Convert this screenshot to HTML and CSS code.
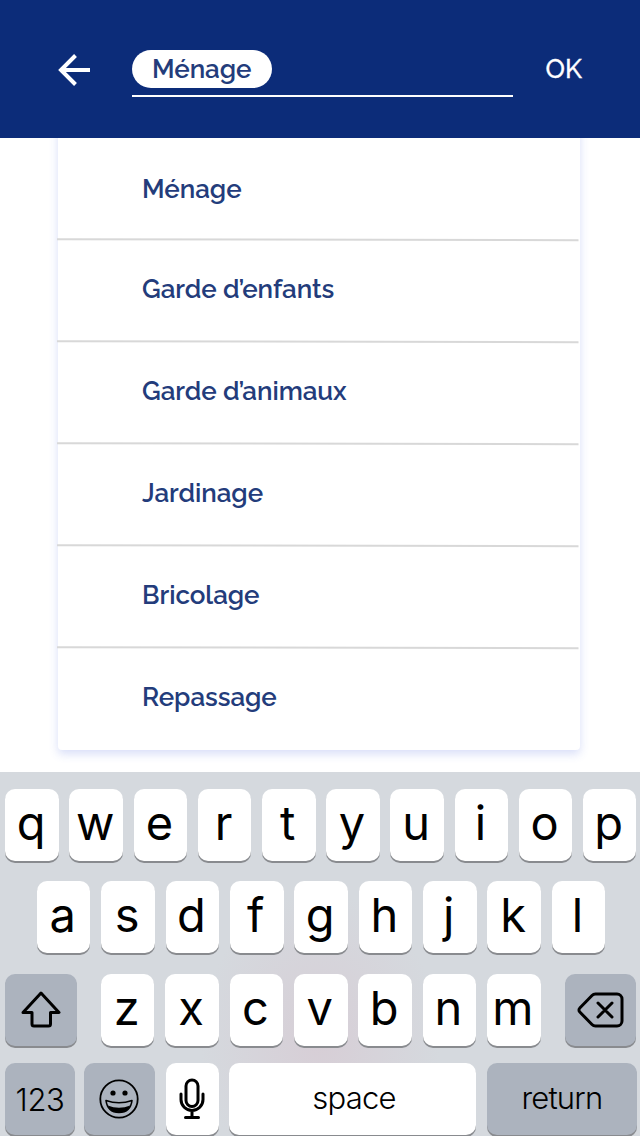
FILE: index.html
```html
<!DOCTYPE html>
<html lang="fr">
<head>
<meta charset="utf-8">
<title>Services</title>
<link rel="stylesheet" href="styles.css">
</head>
<body>
<header class="topbar">
  <svg class="back" width="34" height="34" viewBox="0 0 34 34"><path d="M33 17H4M18.500 2.500L4 17l14.500 14.500" fill="none" stroke="#fff" stroke-width="4"/></svg>
  <div class="field"><span class="chip">Ménage</span></div>
  <span class="ok">OK</span>
</header>
<main class="content">
  <ul class="options">
    <li class="option"><span>Ménage</span><svg class="rule" viewBox="0 0 522 4"><path d="M0 1.2L521.5 2.2"/></svg></li>
    <li class="option"><span>Garde d’enfants</span><svg class="rule" viewBox="0 0 522 4"><path d="M0 1.2L521.5 2.2"/></svg></li>
    <li class="option"><span>Garde d’animaux</span><svg class="rule" viewBox="0 0 522 4"><path d="M0 1.2L521.5 2.2"/></svg></li>
    <li class="option"><span>Jardinage</span><svg class="rule" viewBox="0 0 522 4"><path d="M0 1.2L521.5 2.2"/></svg></li>
    <li class="option"><span>Bricolage</span><svg class="rule" viewBox="0 0 522 4"><path d="M0 1.2L521.5 2.2"/></svg></li>
    <li class="option"><span>Repassage</span></li>
  </ul>
</main>
<section class="keyboard">
  <div class="row row1"><span class="key">q</span><span class="key">w</span><span class="key">e</span><span class="key">r</span><span class="key">t</span><span class="key">y</span><span class="key">u</span><span class="key">i</span><span class="key">o</span><span class="key">p</span></div>
  <div class="row row2"><span class="key">a</span><span class="key">s</span><span class="key">d</span><span class="key">f</span><span class="key">g</span><span class="key">h</span><span class="key">j</span><span class="key">k</span><span class="key">l</span></div>
  <div class="row row3">
    <span class="key dark wide"><svg width="42" height="38" viewBox="0 0 42 38"><path d="M21 2L39 21.5H30.5V33a2 2 0 0 1-2 2H14a2 2 0 0 1-2-2V21.5H3Z"/></svg></span>
    <div class="letters"><span class="key">z</span><span class="key">x</span><span class="key">c</span><span class="key">v</span><span class="key">b</span><span class="key">n</span><span class="key">m</span></div>
    <span class="key dark wide erase"><svg width="48" height="36" viewBox="0 0 48 36"><path d="M18.5 2H40a5 5 0 0 1 5 5V29a5 5 0 0 1-5 5H18.5a5 5 0 0 1-3.5-1.5L2.8 20a2.8 2.8 0 0 1 0-4L15 3.5A5 5 0 0 1 18.500 2ZM21 11L35 25M35 11L21 25"/></svg></span>
  </div>
  <div class="row row4">
    <span class="key dark num">123</span>
    <span class="key dark emoji"><svg width="40" height="40" viewBox="0 0 40 40"><circle cx="20" cy="20" r="18.7" stroke-width="1.8"/><circle class="solid" cx="14" cy="14" r="2.6"/><circle class="solid" cx="26" cy="14" r="2.6"/><path d="M7 21.5Q20 26 33 21.5Q31.5 33.5 20 33.5T7 21.5Z" stroke-width="1.6"/><path class="solid" d="M8.7 26.500Q20 31 31.3 26.500Q28.500 33.500 20 33.500T8.7 26.500Z"/></svg></span>
    <span class="key mic"><svg width="26" height="42" viewBox="0 0 26 42"><rect x="7" y="2" width="12" height="26.500" rx="6"/><path d="M2 16V21.500a11 11 0 0 0 22 0V16M13 32.500V39M6.500 39.500H19.500"/></svg></span>
    <span class="key space">space</span>
    <span class="key dark return">return</span>
  </div>
</section>
</body>
</html>
```
FILE: styles.css
```css
* { box-sizing: border-box; }
body {
  margin: 0;
  width: 640px;
  height: 1136px;
  overflow: hidden;
  display: flex;
  flex-direction: column;
  background: #fff;
  font-family: Raleway, Lato, sans-serif;
  font-size: 26px;
  font-weight: 600;
  color: #233c7b;
}
.topbar {
  flex: none;
  height: 138px;
  padding: 50px 0 0 57px;
  display: flex;
  align-items: flex-start;
  background: #0c2c79;
}
.back { margin: 3px 41px 0 0; }
.field {
  width: 381px;
  height: 47px;
  border-bottom: 2px solid #fff;
}
.chip {
  display: flex;
  width: 140px;
  height: 38px;
  padding-left: 20px;
  border-radius: 19px;
  background: #fff;
  line-height: 38px;
  letter-spacing: -.1px;
}
.ok {
  margin-left: 32.500px;
  color: #fff;
  font-weight: 500;
  line-height: 38px;
  -webkit-text-stroke: .3px #fff;
}
.content {
  flex: none;
  height: 634px;
  padding: 0 60px 0 58px;
  overflow: hidden;
}
.options {
  list-style: none;
  margin: -14px 0 0;
  padding: 14px 0 0;
  height: 626px;
  border-radius: 4px;
  box-shadow: 0 4px 10px rgba(60, 90, 220, .2);
}
.option {
  position: relative;
  height: 102px;
  padding-left: 84px;
  line-height: 98px;
  letter-spacing: -.05px;
}
.option:first-child { line-height: 103px; }
.rule {
  position: absolute;
  left: -1px;
  bottom: -2px;
  width: 522px;
  height: 4px;
  fill: none;
  stroke: #d8d8d8;
  stroke-width: 2;
}
.keyboard {
  flex: none;
  height: 364px;
  padding: 17px 3px 0 5.3px;
  background: radial-gradient(ellipse 120px 150px at 320px 270px, #d7ced6, rgba(215, 206, 214, 0)), #d5d9de;
  font-family: Inter, sans-serif;
  font-weight: 400;
  color: #000;
}
.row, .letters { display: flex; gap: 10.7px; }
.row { height: 72px; }
.row2 { margin: 20.400px 0 0 31.700px; }
.row3 { margin-top: 20.500px; gap: 24px; }
.row4 { margin-top: 17px; }
.row2, .letters { gap: 10.850px; }
.key {
  flex: none;
  display: flex;
  justify-content: center;
  align-items: center;
  width: 53.5px;
  height: 72px;
  border-radius: 10px;
  background: #fff;
  box-shadow: 0 2px 0 #898b8f;
  font-size: 47px;
  line-height: 68px;
}
.row1 .key, .row2 .key, .letters .key { padding: 0 2px 4px 0; }
.dark { background: #acb3be; }
.wide { width: 71.7px; }
.erase { padding-left: 1px; }
.num, .space, .return { font-size: 31px; font-weight: 350; letter-spacing: -.8px; }
.num { width: 69.500px; padding-top: 3px; letter-spacing: -.3px; }
.space, .return { padding-bottom: 1px; }
.emoji { width: 70.500px; margin-left: -1px; padding-right: 1px; }
.mic { padding-right: 1px; }
.space { width: 247px; padding-left: 2px; margin-left: -.4px; }
.return { width: 149.500px; }
.key svg {
  flex: none;
  fill: none;
  stroke: #000;
  stroke-width: 3;
  stroke-linecap: round;
  stroke-linejoin: round;
}
.key .solid { fill: #000; stroke: none; }
```
